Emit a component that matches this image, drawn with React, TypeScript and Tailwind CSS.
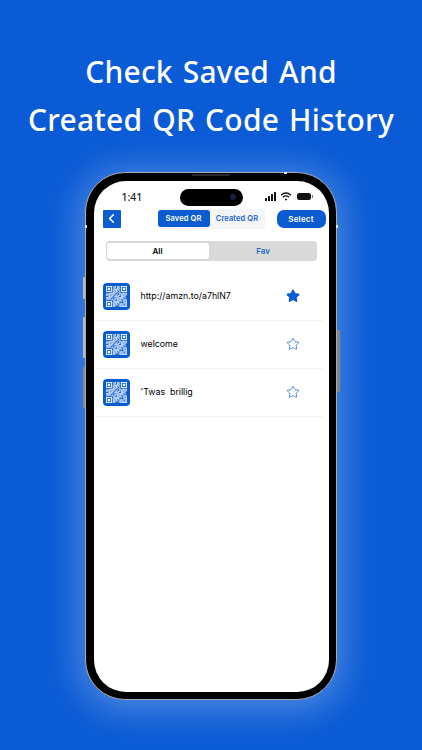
import React from 'react';
import { ChevronLeft, Star } from 'lucide-react';

const rows = [
  { text: 'http://amzn.to/a7hlN7', fav: true },
  { text: 'welcome', fav: false },
  { text: "'Twas  brillig", fav: false },
];

// random looking QR modules, on a 25 x 25 grid
const modules: [number, number][] = [];
for (let y = 0; y < 25; y++) {
  for (let x = 0; x < 25; x++) {
    const inFinder = (x < 8 && y < 8) || (x > 16 && y < 8) || (x < 8 && y > 16);
    if (!inFinder && (x * 7 + y * 13 + ((x * y) % 5)) % 3 !== 0) modules.push([x, y]);
  }
}

function Finder({ x, y }: { x: number; y: number }) {
  return (
    <g>
      <rect x={x + 0.5} y={y + 0.5} width="6" height="6" fill="none" stroke="#fff" strokeWidth="1" />
      <rect x={x + 2} y={y + 2} width="3" height="3" fill="#fff" />
    </g>
  );
}

function QrIcon() {
  return (
    <div className="flex h-[27px] w-[27px] items-center justify-center rounded-[4px] bg-[#0b5bd3]">
      <svg width="21" height="21" viewBox="0 0 25 25">
        <Finder x={0} y={0} />
        <Finder x={18} y={0} />
        <Finder x={0} y={18} />
        {modules.map(([x, y]) => (
          <rect key={`${x}-${y}`} x={x} y={y} width="1" height="1" fill="#fff" />
        ))}
      </svg>
    </div>
  );
}

function StatusIcons() {
  return (
    <div className="flex items-center gap-[3px]">
      <svg width="12" height="9" viewBox="0 0 12 9" fill="#111">
        <rect x="0" y="6" width="2" height="3" rx="0.5" />
        <rect x="3" y="4" width="2" height="5" rx="0.5" />
        <rect x="6" y="2" width="2" height="7" rx="0.5" />
        <rect x="9" y="0" width="2" height="9" rx="0.5" />
      </svg>
      <svg width="12" height="9" viewBox="0 0 12 9" fill="none" stroke="#111" strokeWidth="1.4">
        <path d="M1 3.2C4 .6 8 .6 11 3.2" />
        <path d="M2.9 5.2C4.8 3.6 7.2 3.6 9.1 5.2" />
        <path d="M6 8.8 4.6 7.1C5.4 6.5 6.6 6.5 7.4 7.1Z" fill="#111" stroke="none" />
      </svg>
      <div className="ml-[2px] flex items-center">
        <div className="h-[7px] w-[14px] rounded-[2.5px] bg-[#111]" />
        <div className="ml-[1px] h-[3px] w-[1px] bg-[#777]" />
      </div>
    </div>
  );
}

export default function App() {
  return (
    <div className="h-[750px] w-[422px] overflow-hidden bg-[#0b5bd6] font-['Noto_Sans',sans-serif]">
      <h1 className="pt-[48px] text-center text-[30px] leading-[48px] font-medium tracking-[0.2px] [word-spacing:2px] text-white">
        Check Saved And
        <br />
        Created QR Code History
      </h1>

      {/* Phone */}
      <div className="relative mx-auto mt-[28px] h-[528px] w-[252px] rounded-[40px] border-[1.5px] border-[#a9abae] bg-black p-[7.5px] shadow-[0_4px_34px_8px_rgba(255,255,255,0.26)]">
        {/* side buttons */}
        <div className="absolute top-[103.5px] -left-[3.5px] h-[22px] w-[2.5px] rounded-l-[1px] bg-[#b8bcc4]" />
        <div className="absolute top-[143.5px] -left-[3.5px] h-[41px] w-[2.5px] rounded-l-[1px] bg-[#b8bcc4]" />
        <div className="absolute top-[193.5px] -left-[3.5px] h-[41px] w-[2.5px] rounded-l-[1px] bg-[#85888d]" />
        <div className="absolute top-[156.5px] -right-[3.5px] h-[62px] w-[2.5px] rounded-r-[1px] bg-[#85888d]" />
        {/* antenna marks */}
        <div className="absolute -top-[1.5px] left-[198px] h-[2px] w-[3px] bg-[#e4e6ea]" />
        <div className="absolute top-[52px] -left-[1.5px] h-[3px] w-[2px] bg-[#e4e6ea]" />
        <div className="absolute top-[52px] -right-[1.5px] h-[3px] w-[2px] bg-[#e4e6ea]" />
        {/* earpiece */}
        <div className="absolute top-[1px] left-1/2 h-[2px] w-[38px] -translate-x-1/2 rounded-full bg-[#2b2b2b]" />

        <div className="flex h-full w-full flex-col overflow-hidden rounded-[32px] bg-white">
          {/* Status bar */}
          <div className="flex h-[25px] shrink-0 items-end pr-[16px] pl-[28px]">
            <span className="w-[58px] pb-[2px] text-[10.5px] leading-[14px] font-medium text-[#222]">1:41</span>
            <div className="flex h-[17px] w-[63px] items-center justify-end rounded-full bg-black pr-[7px]">
              <div className="h-[6px] w-[6px] rounded-full bg-[#13233f]" />
            </div>
            <div className="ml-auto pb-[5px]">
              <StatusIcons />
            </div>
          </div>

          {/* Top nav */}
          <div className="mt-[4px] flex h-[18px] shrink-0 items-center pr-[3px] pl-[9px] font-['Inter',sans-serif]">
            <button className="flex h-[18px] w-[18px] items-center justify-center rounded-[1px] bg-[#0b5bd3]">
              <ChevronLeft size={15} strokeWidth={2.6} color="#fff" />
            </button>
            <div className="ml-[37px] flex h-[20px] w-[107px] items-center rounded-[3px] bg-[#f3f4f6]">
              <div className="flex h-[17px] w-[52px] items-center justify-center rounded-[3px] bg-[#0b5bd3] text-[7.5px] font-semibold tracking-[0.1px] text-white">
                Saved QR
              </div>
              <div className="flex-1 text-center text-[7.5px] font-semibold tracking-[0.1px] text-[#2467c7]">Created QR</div>
            </div>
            <button className="ml-auto flex h-[18px] w-[49px] items-center justify-center rounded-[7px] bg-[#0b5bd3] text-[8px] font-semibold tracking-[0.2px] text-white">
              Select
            </button>
          </div>

          {/* All / Fav */}
          <div className="mx-[12px] mt-[13px] flex h-[20px] shrink-0 items-center rounded-[4px] bg-[#d9d9d9] px-[1px] font-['Inter',sans-serif]">
            <div className="flex h-[16px] w-[102px] items-center justify-center rounded-[3px] bg-white text-[8px] font-semibold text-black">
              All
            </div>
            <div className="flex-1 pl-[2px] text-center text-[8px] font-semibold text-[#2467c7]">Fav</div>
          </div>

          {/* List */}
          <div className="mt-[12px] font-['Inter',sans-serif]">
            {rows.map((r) => (
              <div key={r.text} className="mr-[6px] flex h-[48px] items-center border-b border-[#f3f3f3] pl-[9px]">
                <QrIcon />
                <span className="ml-[11px] flex-1 text-[8.8px] whitespace-pre text-black">{r.text}</span>
                <Star
                  size={14}
                  strokeWidth={r.fav ? 2 : 1.2}
                  color="#0b5bd3"
                  fill={r.fav ? '#0b5bd3' : 'none'}
                  className="mr-[23px]"
                />
              </div>
            ))}
          </div>
        </div>
      </div>
    </div>
  );
}
